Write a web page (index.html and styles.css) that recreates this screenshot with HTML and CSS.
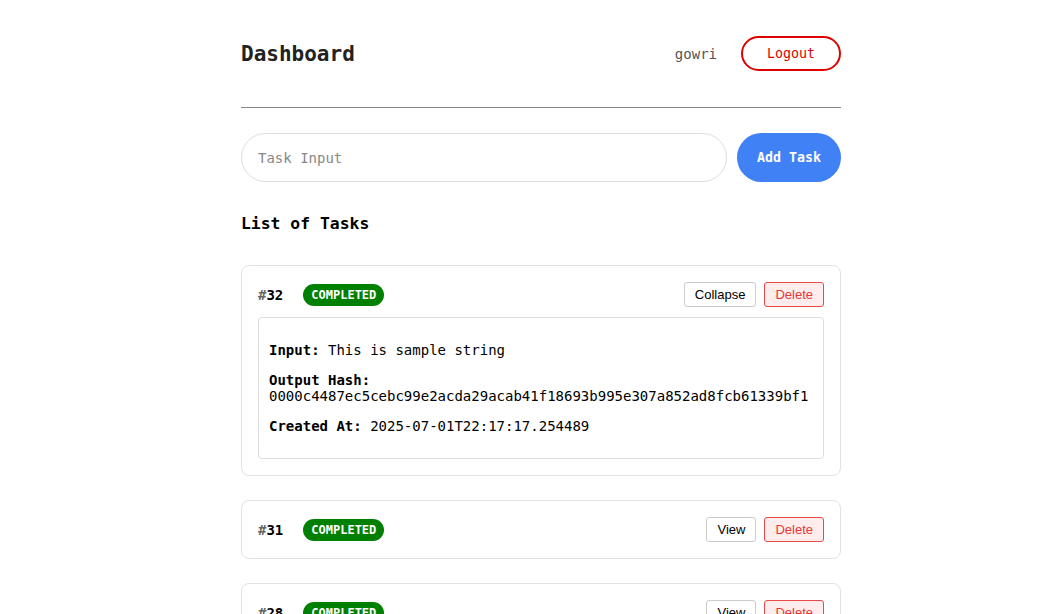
FILE: index.html
```html
<!DOCTYPE html>
<html>
<head>
<meta charset="utf-8">
<link rel="stylesheet" href="styles.css">
</head>
<body>
<div class="container">
  <header class="header">
    <h2 class="title">Dashboard</h2>
    <div class="user">
      <span class="username">gowri</span>
      <button class="logout">Logout</button>
    </div>
  </header>
  <div class="add-row">
    <input class="task-input" type="text" placeholder="Task Input">
    <button class="add-btn">Add Task</button>
  </div>
  <h3 class="section-title">List of Tasks</h3>

  <div class="card">
    <div class="card-head">
      <div class="card-id"><span class="num"><span class="hash">#</span>32</span><span class="badge">COMPLETED</span></div>
      <div class="actions"><button class="btn">Collapse</button><button class="btn btn-del">Delete</button></div>
    </div>
    <div class="details">
      <p><strong>Input:</strong> This is sample string</p>
      <p><strong>Output Hash:</strong><br>0000c4487ec5cebc99e2acda29acab41f18693b995e307a852ad8fcb61339bf1</p>
      <p><strong>Created At:</strong> 2025-07-01T22:17:17.254489</p>
    </div>
  </div>

  <div class="card">
    <div class="card-head">
      <div class="card-id"><span class="num"><span class="hash">#</span>31</span><span class="badge">COMPLETED</span></div>
      <div class="actions"><button class="btn">View</button><button class="btn btn-del">Delete</button></div>
    </div>
  </div>

  <div class="card">
    <div class="card-head">
      <div class="card-id"><span class="num"><span class="hash">#</span>28</span><span class="badge">COMPLETED</span></div>
      <div class="actions"><button class="btn">View</button><button class="btn btn-del">Delete</button></div>
    </div>
  </div>
</div>
</body>
</html>
```
FILE: styles.css
```css
html, body {
  margin: 0;
  background: #fff;
}
body {
  padding-left: 43px;
  font-family: "DejaVu Sans Mono", monospace;
  color: #000;
}
.container {
  width: 600px;
  margin: 0 auto;
}
.header {
  display: flex;
  align-items: center;
  justify-content: space-between;
  padding: 36px 0 36px;
  border-bottom: 1px solid #888;
}
.title {
  margin: 0;
  font-size: 21px;
  font-weight: bold;
  color: #222;
}
.user {
  display: flex;
  align-items: center;
}
.username {
  font-size: 14px;
  color: #555;
  margin-right: 24px;
}
.logout {
  height: 35px;
  width: 100px;
  padding: 0;
  border: 2px solid #e00000;
  border-radius: 20px;
  background: #fff;
  color: #e00000;
  font-family: "DejaVu Sans Mono", monospace;
  font-size: 13.33px;
}
.add-row {
  display: flex;
  gap: 10px;
  margin-top: 25px;
}
.task-input {
  flex: 1;
  height: 49px;
  box-sizing: border-box;
  border: 1px solid #ddd;
  border-radius: 25px;
  padding: 0 16px;
  font-family: "DejaVu Sans Mono", monospace;
  font-size: 14px;
  outline: none;
}
.task-input::placeholder {
  color: #888;
}
.add-btn {
  width: 104px;
  height: 49px;
  border: none;
  border-radius: 25px;
  background: #4081f6;
  color: #fff;
  font-family: "DejaVu Sans Mono", monospace;
  font-size: 13.33px;
  font-weight: bold;
  padding: 0;
}
.section-title {
  margin: 32px 0 32px;
  font-size: 16.4px;
  font-weight: bold;
}
.card {
  border: 1px solid #e2e2e2;
  border-radius: 8px;
  padding: 16px;
  margin-bottom: 24px;
}
.card-head {
  display: flex;
  align-items: center;
  justify-content: space-between;
}
.card-id {
  display: flex;
  align-items: center;
  gap: 20px;
}
.num {
  font-size: 14px;
  font-weight: bold;
}
.hash {
  color: #666;
}
.badge {
  display: inline-block;
  height: 22px;
  line-height: 22px;
  padding: 0 8px;
  border-radius: 11px;
  background: #008000;
  color: #fff;
  font-size: 12px;
  font-weight: bold;
}
.actions {
  display: flex;
  gap: 8px;
}
.btn {
  font-family: "Liberation Sans", Arial, sans-serif;
  font-size: 13px;
  line-height: 15px;
  padding: 4px 10px;
  height: 25px;
  box-sizing: border-box;
  border: 1px solid #ccc;
  border-radius: 3px;
  background: #fff;
  color: #000;
}
.btn-del {
  border-color: #e84a4a;
  background: #ffecec;
  color: #e53935;
}
.details {
  margin-top: 10px;
  border: 1px solid #ddd;
  border-radius: 4px;
  padding: 10px;
  font-size: 14px;
}
.details p {
  margin: 14px 0;
}
```
